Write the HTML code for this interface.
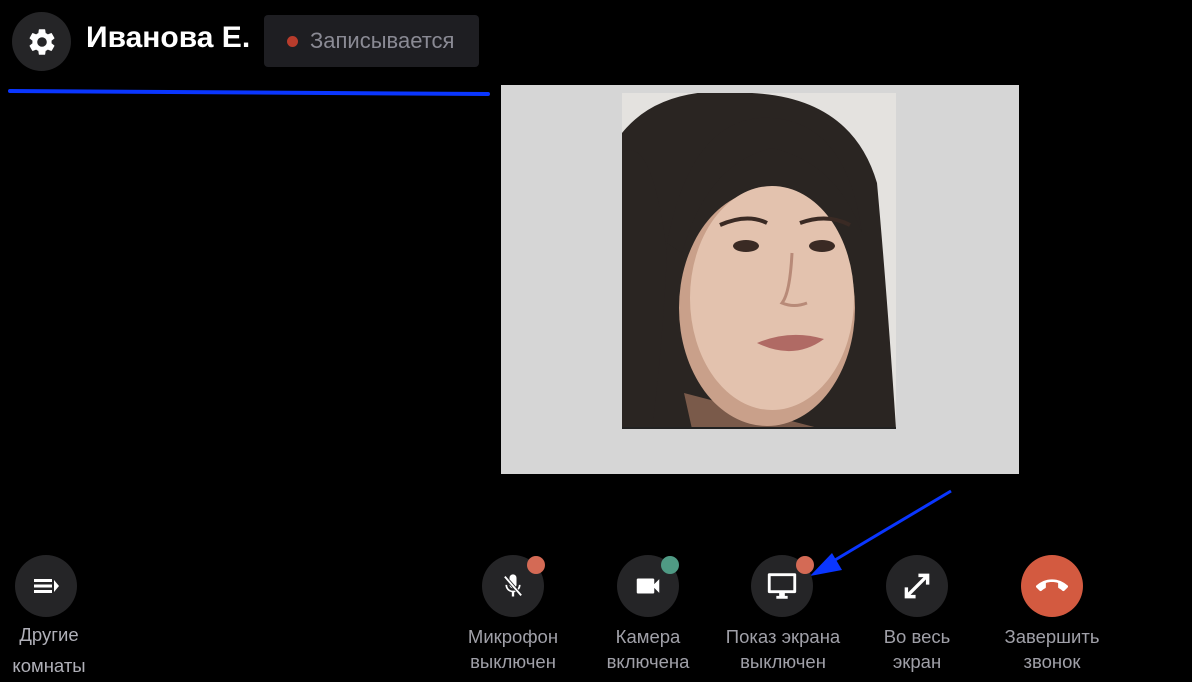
<!DOCTYPE html>
<html><head><meta charset="utf-8"><style>
*{margin:0;padding:0;box-sizing:border-box}
body{width:1192px;height:682px;background:#000;position:relative;overflow:hidden;font-family:"Liberation Sans","DejaVu Sans",sans-serif}
.abs{position:absolute}
.c{position:absolute;width:62px;height:62px;border-radius:50%;background:#252527;display:flex;align-items:center;justify-content:center}
.lbl{position:absolute;color:#a0a0a8;font-size:18.5px;text-align:center;line-height:25px;width:160px}
.dot{position:absolute;width:18px;height:18px;border-radius:50%}
</style></head><body>
<div class="c" style="left:12px;top:12px;width:59px;height:59px">
<svg width="32" height="32" viewBox="0 0 24 24"><path fill="#fff" d="M19.14 12.94c.04-.3.06-.61.06-.94 0-.32-.02-.64-.07-.94l2.03-1.58a.49.49 0 0 0 .12-.61l-1.920-3.32a.49.49 0 0 0-.59-.22l-2.39.96c-.5-.38-1.03-.7-1.62-.94l-.36-2.54a.48.48 0 0 0-.48-.41h-3.84c-.24 0-.43.17-.47.41l-.36 2.540c-.59.24-1.13.57-1.62.94l-2.39-.96a.48.48 0 0 0-.59.22L2.74 8.87c-.12.21-.08.47.12.61l2.03 1.58c-.05.3-.09.63-.09.94s.02.64.07.94l-2.03 1.58a.49.49 0 0 0-.12.61l1.92 3.32c.12.22.37.29.59.22l2.39-.96c.5.38 1.03.7 1.62.94l.36 2.54c.05.24.24.41.48.41h3.84c.24 0 .44-.17.47-.41l.36-2.54c.59-.24 1.13-.56 1.62-.94l2.39.96c.22.08.47 0 .59-.22l1.92-3.32c.12-.22.07-.47-.12-.61l-2.01-1.58zM12 15.6A3.6 3.6 0 1 1 12 8.4a3.6 3.6 0 0 1 0 7.2z"/></svg></div>
<div class="abs" style="left:86px;top:21px;color:#fff;font-size:30px;font-weight:bold">Иванова Е.</div>
<div class="abs" style="left:264px;top:15px;width:215px;height:52px;background:#1e1e22;border-radius:4px"></div>
<div class="abs" style="left:287px;top:36px;width:11px;height:11px;border-radius:50%;background:#b83c2c"></div>
<div class="abs" style="left:310px;top:28px;color:#8a8a94;font-size:22px">Записывается</div>
<svg class="abs" style="left:0;top:0" width="1192" height="682">
<line x1="10" y1="91" x2="488" y2="94" stroke="#0a36ff" stroke-width="4" stroke-linecap="round"/>
<line x1="951" y1="491" x2="830" y2="563" stroke="#0a36ff" stroke-width="3"/>
<polygon points="810,576 832,553 842,570" fill="#0a36ff"/>
</svg>
<div class="abs" style="left:501px;top:85px;width:518px;height:389px;background:#d6d6d6"></div>
<svg class="abs" style="left:622px;top:93px" width="274" height="336" viewBox="0 0 274 336">
<rect width="274" height="336" fill="#e4e2df"/>
<path d="M0 40 Q40 -10 130 0 Q230 5 255 90 Q265 200 274 336 L0 336Z" fill="#2a2522"/>
<path d="M0 60 Q30 40 45 160 Q40 260 30 336 L0 336Z" fill="#2a2522"/>
<path d="M62 300 L200 336 L70 336Z" fill="#7a5a4a"/>
<ellipse cx="145" cy="215" rx="88" ry="118" fill="#c9a08a"/>
<ellipse cx="150" cy="205" rx="82" ry="112" fill="#e3c2ae"/>
<path d="M45 150 Q70 20 150 25 Q225 30 240 140 Q215 70 150 55 Q85 70 60 160Z" fill="#2a2522"/>
<path d="M98 132 Q125 120 145 130" stroke="#3a2a24" stroke-width="4" fill="none"/>
<path d="M178 130 Q205 120 228 132" stroke="#3a2a24" stroke-width="4" fill="none"/>
<ellipse cx="124" cy="153" rx="13" ry="6" fill="#3a2a24"/>
<ellipse cx="200" cy="153" rx="13" ry="6" fill="#3a2a24"/>
<path d="M170 160 Q168 200 160 210 Q172 215 185 210" stroke="#b88a78" stroke-width="3" fill="none"/>
<path d="M135 250 Q168 236 202 246 Q172 268 135 250Z" fill="#b06a64"/>
<rect y="334" width="274" height="2" fill="#222"/>
</svg>
<div class="c" style="left:15px;top:555px"><svg width="32" height="20" viewBox="0 0 32 20"><rect x="4" y="3" width="18" height="3" fill="#fff"/><rect x="4" y="8.5" width="18" height="3" fill="#fff"/><rect x="4" y="14" width="18" height="3" fill="#fff"/><polygon points="24,4 29,10 24,16" fill="#fff"/></svg></div>
<div class="lbl" style="left:-31px;top:619px;width:160px;line-height:31px;color:#b0b0b8">Другие<br>комнаты</div>
<div class="c" style="left:482px;top:555px"><svg width="28" height="28" viewBox="0 0 24 24"><path fill="#fff" d="M12 14a3 3 0 0 0 3-3V5a3 3 0 0 0-6 0v6a3 3 0 0 0 3 3zm5-3a5 5 0 0 1-10 0H5.5a6.5 6.5 0 0 0 5.5 6.4V21h2v-3.6A6.5 6.5 0 0 0 18.5 11z"/><line x1="5" y1="4" x2="19" y2="20" stroke="#252527" stroke-width="3"/><line x1="5" y1="4" x2="19" y2="20" stroke="#fff" stroke-width="1.6"/></svg></div>
<div class="dot" style="left:527px;top:556px;background:#d46a55"></div>
<div class="lbl" style="left:433px;top:624px">Микрофон<br>выключен</div>
<div class="c" style="left:617px;top:555px"><svg width="30" height="30" viewBox="0 0 24 24"><path fill="#fff" d="M17 10.5V7a1 1 0 0 0-1-1H4a1 1 0 0 0-1 1v10a1 1 0 0 0 1 1h12a1 1 0 0 0 1-1v-3.5l4 4v-11z"/></svg></div>
<div class="dot" style="left:661px;top:556px;background:#4f9a84"></div>
<div class="lbl" style="left:568px;top:624px">Камера<br>включена</div>
<div class="c" style="left:751px;top:555px"><svg width="34" height="34" viewBox="0 0 24 24"><path fill="#fff" d="M21 3H3a1 1 0 0 0-1 1v12a1 1 0 0 0 1 1h7v2H8v2h8v-2h-2v-2h7a1 1 0 0 0 1-1V4a1 1 0 0 0-1-1zm-1 12H4V5h16z"/></svg></div>
<div class="dot" style="left:796px;top:556px;background:#d46a55"></div>
<div class="lbl" style="left:703px;top:624px">Показ экрана<br>выключен</div>
<div class="c" style="left:886px;top:555px"><svg width="34" height="34" viewBox="0 0 24 24"><path fill="none" stroke="#fff" stroke-width="2.4" d="M5 19L19 5M13 4.5h6.5v6.5M4.5 13v6.5H11"/></svg></div>
<div class="lbl" style="left:837px;top:624px">Во весь<br>экран</div>
<div class="c" style="left:1021px;top:555px;background:#d35a40"><svg width="32" height="32" viewBox="0 0 24 24"><path fill="#fff" d="M12 9c-1.6 0-3.15.25-4.6.72v3.1c0 .39-.23.74-.56.9-.98.49-1.870 1.12-2.66 1.85-.18.18-.43.28-.7.28-.28 0-.53-.11-.71-.29L.29 13.08a1 1 0 0 1 0-1.41C3.34 8.78 7.46 7 12 7s8.66 1.78 11.71 4.67a1 1 0 0 1 0 1.41l-2.48 2.48c-.18.18-.43.29-.71.29-.27 0-.52-.11-.7-.28a11.3 11.3 0 0 0-2.67-1.85.99.99 0 0 1-.56-.9v-3.1C15.15 9.25 13.6 9 12 9z"/></svg></div>
<div class="lbl" style="left:972px;top:624px">Завершить<br>звонок</div>
</body></html>
